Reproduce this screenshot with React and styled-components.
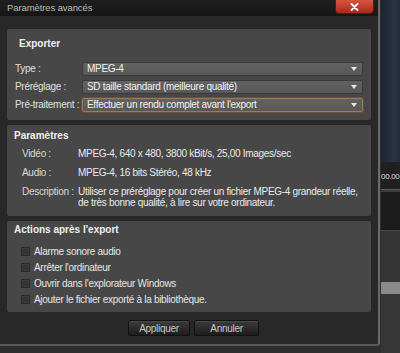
import React from "react";
import styled, { createGlobalStyle } from "styled-components";

const Global = createGlobalStyle`
  html, body { margin: 0; padding: 0; background: #2b2b2b; }
  * { box-sizing: border-box; }
  body { font-family: "Liberation Sans", Arial, sans-serif; font-size: 10px; letter-spacing: -0.3px; color: #e2e2e2; }
`;

const Page = styled.div`
  width: 400px;
  height: 353px;
  display: flex;
  overflow: hidden;
  background: #2e2e2e;
`;

const Dialog = styled.div`
  width: 380px;
  height: 346px;
  display: flex;
  flex-direction: column;
  background: #282828;
  border-right: 2px solid #6a6a6a;
  border-bottom: 2px solid #5a5a5a;
  border-bottom-right-radius: 3px;
`;

const TitleBar = styled.div`
  height: 16px;
  flex: none;
  display: flex;
  justify-content: space-between;
  align-items: flex-start;
  background: linear-gradient(#1f1f1f, #161616);
  padding-left: 7px;
`;

const Title = styled.div`
  font-size: 9.5px;
  line-height: 15px;
  color: #bcbcbc;
  letter-spacing: -0.1px;
`;

const CloseButton = styled.div`
  width: 37px;
  height: 13px;
  margin-right: 5px;
  border-radius: 0 0 3px 3px;
  background: linear-gradient(#d8553f, #a8281a);
  box-shadow: 0 0 0 1px #5a1a10;
  display: flex;
  align-items: center;
  justify-content: center;
`;

const Body = styled.div`
  flex: 1;
  display: flex;
  flex-direction: column;
  padding: 13px 7px 0 7px;
  gap: 5px;
`;

const Panel = styled.div`
  height: ${(p) => p.$h}px;
  flex: none;
  background: #474747;
  border-radius: 2px;
  padding: ${(p) => p.$pad};
  display: flex;
  flex-direction: column;
`;

const PanelTitle = styled.div`
  font-weight: bold;
  font-size: 10px;
  letter-spacing: 0;
  line-height: 12px;
  color: #f0f0f0;
  padding-left: ${(p) => p.$indent || 0}px;
  margin-bottom: ${(p) => p.$mb}px;
`;

const FieldGrid = styled.div`
  display: grid;
  grid-template-columns: 67px 1fr;
  row-gap: 4px;
  align-items: center;
`;

const Label = styled.div`
  color: #e0e0e0;
  line-height: 14px;
  white-space: nowrap;
`;

const Select = styled.div`
  height: 14px;
  background: linear-gradient(#626262, #585858);
  border: 1px solid ${(p) => (p.$focus ? "#a07a52" : "#3a3a3a")};
  box-shadow: ${(p) => (p.$focus ? "0 0 0 1px #6a5038" : "none")};
  border-radius: 2px;
  display: flex;
  align-items: center;
  justify-content: space-between;
  padding: 0 5px 0 4px;
  color: #f2f2f2;
  line-height: 12px;
  white-space: nowrap;
`;

const Arrow = styled.span`
  width: 0;
  height: 0;
  border-left: 3px solid transparent;
  border-right: 3px solid transparent;
  border-top: 4px solid #e8e8e8;
`;

const InfoGrid = styled.div`
  display: grid;
  grid-template-columns: 56px 1fr;
  row-gap: 8px;
  padding-left: 8px;
  line-height: 11px;
`;

const InfoLabel = styled.div`
  color: #d8d8d8;
  white-space: nowrap;
`;

const InfoValue = styled.div`
  color: #ebebeb;
  white-space: nowrap;
`;

const CheckList = styled.div`
  display: flex;
  flex-direction: column;
  gap: 4px;
  padding-left: 7px;
`;

const CheckRow = styled.label`
  display: flex;
  align-items: center;
  gap: 4px;
  height: 12px;
  color: #e6e6e6;
`;

const Box = styled.span`
  width: 9px;
  height: 9px;
  background: #333;
  border: 1px solid #2a2a2a;
  box-shadow: inset 0 0 0 1px #3c3c3c;
`;

const ButtonRow = styled.div`
  display: flex;
  justify-content: center;
  gap: 4px;
  padding-top: 3px;
  padding-left: 9px;
`;

const Button = styled.div`
  width: ${(p) => p.$w}px;
  height: 16px;
  border-radius: 2px;
  border: 1px solid #111;
  background: linear-gradient(#3c3c3c, #1c1c1c);
  box-shadow: inset 0 1px 0 #4a4a4a;
  color: #c8c8c8;
  display: flex;
  align-items: center;
  justify-content: center;
`;

const Backdrop = styled.div`
  flex: 1;
  display: flex;
  flex-direction: column;
  background: #2e2e2e;
  padding-left: 1px;
`;

const Preview = styled.div`
  height: 162px;
  background: linear-gradient(90deg, #1c2230, #2c3446 70%, #242b3a);
`;

const TimeStrip = styled.div`
  height: 28px;
  background: #202020;
  border-bottom: 1px solid #5a5a5a;
  font-size: 8px;
  color: #dcdcdc;
  line-height: 26px;
  padding-top: 2px;
  white-space: nowrap;
  overflow: hidden;
`;

const DarkZone = styled.div`
  height: 40px;
  background: #1c1c1c;
  border-top: 2px solid #3c3c3c;
`;

const GreyZone = styled.div`
  height: 52px;
  background: #353535;
  border-top: 1px solid #444;
`;

const LightBar = styled.div`
  height: 12px;
  background: #8a8a8a;
`;

const LowerZone = styled.div`
  flex: 1;
  background: #363636;
`;

export default function App() {
  return (
    <>
      <Global />
      <Page>
        <Dialog>
          <TitleBar>
            <Title>Paramètres avancés</Title>
            <CloseButton>
              <svg width="9" height="8" viewBox="0 0 9 8">
                <path d="M1.5 1 L7.5 7 M7.5 1 L1.5 7" stroke="#fff" strokeWidth="1.8" strokeLinecap="round" />
              </svg>
            </CloseButton>
          </TitleBar>
          <Body>
            <Panel $h={91} $pad="9px 8px 0 8px">
              <PanelTitle $indent={4} $mb={12}>Exporter</PanelTitle>
              <FieldGrid>
                <Label>Type :</Label>
                <Select>MPEG-4<Arrow /></Select>
                <Label>Préréglage :</Label>
                <Select>SD taille standard (meilleure qualité)<Arrow /></Select>
                <Label>Pré-traitement :</Label>
                <Select $focus>Effectuer un rendu complet avant l'export<Arrow /></Select>
              </FieldGrid>
            </Panel>
            <Panel $h={91} $pad="5px 8px 0 7px">
              <PanelTitle $mb={6}>Paramètres</PanelTitle>
              <InfoGrid>
                <InfoLabel>Vidéo :</InfoLabel>
                <InfoValue>MPEG-4, 640 x 480, 3800 kBit/s, 25,00 Images/sec</InfoValue>
                <InfoLabel>Audio :</InfoLabel>
                <InfoValue>MPEG-4, 16 bits Stéréo, 48 kHz</InfoValue>
                <InfoLabel>Description :</InfoLabel>
                <InfoValue>
                  Utiliser ce préréglage pour créer un fichier MPEG-4 grandeur réelle,<br />
                  de très bonne qualité, à lire sur votre ordinateur.
                </InfoValue>
              </InfoGrid>
            </Panel>
            <Panel $h={91} $pad="3px 8px 0 7px">
              <PanelTitle $mb={9}>Actions après l'export</PanelTitle>
              <CheckList>
                <CheckRow><Box />Alarme sonore audio</CheckRow>
                <CheckRow><Box />Arrêter l'ordinateur</CheckRow>
                <CheckRow><Box />Ouvrir dans l'explorateur Windows</CheckRow>
                <CheckRow><Box />Ajouter le fichier exporté à la bibliothèque.</CheckRow>
              </CheckList>
            </Panel>
            <ButtonRow>
              <Button $w={62}>Appliquer</Button>
              <Button $w={65}>Annuler</Button>
            </ButtonRow>
          </Body>
        </Dialog>
        <Backdrop>
          <Preview />
          <TimeStrip>00.00</TimeStrip>
          <DarkZone />
          <GreyZone />
          <LightBar />
          <LowerZone />
        </Backdrop>
      </Page>
    </>
  );
}
